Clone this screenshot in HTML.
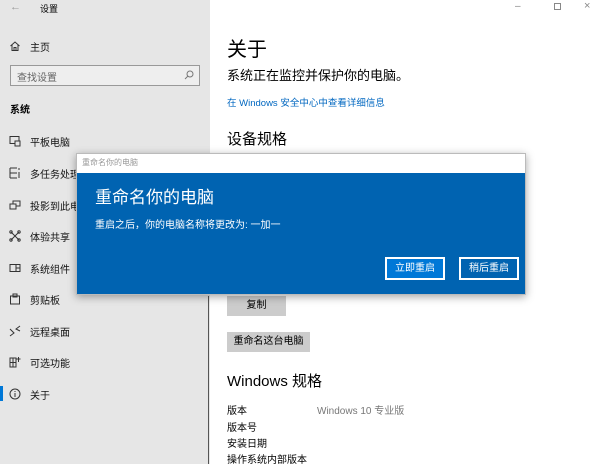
<!DOCTYPE html>
<html><head><meta charset="utf-8"><style>
*{margin:0;padding:0;box-sizing:border-box}
body{width:600px;height:464px;overflow:hidden;position:relative;background:#fff;font-family:"Liberation Sans","Noto Sans CJK SC",sans-serif;color:#000}
.side{position:absolute;left:0;top:0;width:210px;height:464px;background:#e6e6e6}
.t{position:absolute;white-space:nowrap}
.ic{position:absolute;left:9px;width:12px;height:12px}
.item{position:absolute;left:30px;font-size:10px;color:#111}
.dlg{position:absolute;left:76px;top:153px;width:450px;height:142px;background:#fff;border:1px solid #bbb;box-shadow:0 2px 8px rgba(0,0,0,.35)}
.blue{position:absolute;left:0;top:19px;width:448px;height:121px;background:#0063b1}
.btn{position:absolute;top:84px;height:23px;width:60px;border:2px solid #fff;color:#fff;font-size:10px;text-align:center;line-height:19px}
.gb{position:absolute;background:#cccccc;font-size:10px;text-align:center;color:#000}
.lab{position:absolute;left:227px;font-size:10px}
</style></head><body>
<div class="side"></div>
<div class="t" style="left:10px;top:1px;font-size:11px;color:#999">←</div>
<div class="t" style="left:40px;top:2px;font-size:9px">设置</div>
<div class="t" style="left:515px;top:1px;font-size:10px;color:#888">–</div>
<div style="position:absolute;left:554px;top:3px;width:7px;height:7px;border:1px solid #888"></div>
<div class="t" style="left:584px;top:0px;font-size:11px;color:#888">×</div>

<svg class="ic" style="top:40px" viewBox="0 0 12 12" fill="none" stroke="#333"><path d="M1.5 6L6 2l4.5 4M3 5v5.5h6V5M5 10.5v-3h2v3"/></svg>
<div class="item" style="top:39px">主页</div>
<div style="position:absolute;left:10px;top:65px;width:190px;height:21px;border:1px solid #999;background:#eee"></div>
<div class="t" style="left:17px;top:69px;font-size:10px;color:#666">查找设置</div>
<svg style="position:absolute;left:184px;top:70px" width="10" height="10" viewBox="0 0 10 10" fill="none" stroke="#777"><circle cx="6" cy="4" r="3"/><path d="M4 6L1 9"/></svg>
<div class="t" style="left:10px;top:101px;font-size:10px;font-weight:bold">系统</div>

<svg class="ic" style="top:135px" viewBox="0 0 12 12" fill="none" stroke="#333"><rect x="1" y="1.5" width="9" height="7"/><rect x="6" y="6" width="5" height="5" fill="#e6e6e6"/></svg>
<div class="item" style="top:134px">平板电脑</div>
<svg class="ic" style="top:167px" viewBox="0 0 12 12" fill="none" stroke="#333"><path d="M1 1v10M1 1h7M1 11h7M1 6h7M10 1v2M10 5v6"/></svg>
<div class="item" style="top:166px">多任务处理</div>
<svg class="ic" style="top:199px" viewBox="0 0 12 12" fill="none" stroke="#333"><rect x="4" y="2" width="7" height="5"/><rect x="1" y="5" width="6" height="5" fill="#e6e6e6"/></svg>
<div class="item" style="top:198px">投影到此电</div>
<svg class="ic" style="top:230px" viewBox="0 0 12 12" fill="none" stroke="#333"><path d="M2 2l8 8M10 2l-8 8"/><circle cx="2" cy="2" r="1.2"/><circle cx="10" cy="2" r="1.2"/><circle cx="2" cy="10" r="1.2"/><circle cx="10" cy="10" r="1.2"/></svg>
<div class="item" style="top:229px">体验共享</div>
<svg class="ic" style="top:262px" viewBox="0 0 12 12" fill="none" stroke="#333"><rect x="1" y="2.5" width="10" height="7"/><path d="M7 2.5v7M7 6h4"/></svg>
<div class="item" style="top:261px">系统组件</div>
<svg class="ic" style="top:293px" viewBox="0 0 12 12" fill="none" stroke="#333"><rect x="1.5" y="3" width="9" height="8"/><rect x="4" y="1" width="4" height="3"/></svg>
<div class="item" style="top:292px">剪贴板</div>
<svg class="ic" style="top:325px" viewBox="0 0 12 12" fill="none" stroke="#333"><path d="M1 4l4 4-4 3M11 1L7 4l4 2"/></svg>
<div class="item" style="top:324px">远程桌面</div>
<svg class="ic" style="top:356px" viewBox="0 0 12 12" fill="none" stroke="#333"><path d="M1 2h6v9H1zM1 6.5h6M4 2v9M9.5 1v5M7.5 3h4"/></svg>
<div class="item" style="top:355px">可选功能</div>
<div style="position:absolute;left:0;top:386px;width:3px;height:15px;background:#0078d7"></div>
<svg class="ic" style="top:388px" viewBox="0 0 12 12" fill="none" stroke="#333"><circle cx="6" cy="6" r="5"/><path d="M6 5v4M6 3v1"/></svg>
<div class="item" style="top:387px">关于</div>
<div style="position:absolute;left:208px;top:296px;width:1px;height:168px;background:#555"></div>

<div class="t" style="left:227px;top:33px;font-size:20px">关于</div>
<div class="t" style="left:227px;top:65px;font-size:13px">系统正在监控并保护你的电脑。</div>
<div class="t" style="left:227px;top:95px;font-size:9.5px;color:#0067c0">在 Windows 安全中心中查看详细信息</div>
<div class="t" style="left:227px;top:128px;font-size:15px">设备规格</div>

<div class="gb" style="left:227px;top:296px;width:59px;height:20px;line-height:20px">复制</div>
<div class="gb" style="left:227px;top:332px;width:83px;height:20px;line-height:20px">重命名这台电脑</div>
<div class="t" style="left:227px;top:370px;font-size:15px">Windows 规格</div>
<div class="lab" style="top:402px">版本</div>
<div class="t" style="left:317px;top:402px;font-size:10px;color:#777">Windows 10 专业版</div>
<div class="lab" style="top:419px">版本号</div>
<div class="lab" style="top:435px">安装日期</div>
<div class="lab" style="top:451px">操作系统内部版本</div>

<div class="dlg">
<div class="t" style="left:5px;top:3px;font-size:8px;color:#999">重命名你的电脑</div>
<div class="blue">
<div class="t" style="left:18px;top:10px;font-size:17px;color:#fff">重命名你的电脑</div>
<div class="t" style="left:18px;top:43px;font-size:10px;color:#fff">重启之后，你的电脑名称将更改为: 一加一</div>
<div class="btn" style="left:308px;background:#0078d7">立即重启</div>
<div class="btn" style="left:382px">稍后重启</div>
</div></div>
</body></html>
